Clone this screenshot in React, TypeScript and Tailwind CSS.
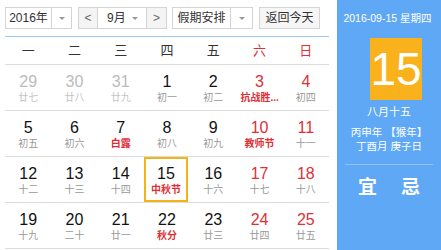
import React from 'react';

type Day = {
  n: number;
  l: string;
  muted?: boolean;
  weekend?: boolean;
  fest?: boolean;
  today?: boolean;
};

const weeks: Day[][] = [
  [
    { n: 29, l: '廿七', muted: true },
    { n: 30, l: '廿八', muted: true },
    { n: 31, l: '廿九', muted: true },
    { n: 1, l: '初一' },
    { n: 2, l: '初二' },
    { n: 3, l: '抗战胜...', weekend: true, fest: true },
    { n: 4, l: '初四', weekend: true },
  ],
  [
    { n: 5, l: '初五' },
    { n: 6, l: '初六' },
    { n: 7, l: '白露', fest: true },
    { n: 8, l: '初八' },
    { n: 9, l: '初九' },
    { n: 10, l: '教师节', weekend: true, fest: true },
    { n: 11, l: '十一', weekend: true },
  ],
  [
    { n: 12, l: '十二' },
    { n: 13, l: '十三' },
    { n: 14, l: '十四' },
    { n: 15, l: '中秋节', fest: true, today: true },
    { n: 16, l: '十六' },
    { n: 17, l: '十七', weekend: true },
    { n: 18, l: '十八', weekend: true },
  ],
  [
    { n: 19, l: '十九' },
    { n: 20, l: '二十' },
    { n: 21, l: '廿一' },
    { n: 22, l: '秋分', fest: true },
    { n: 23, l: '廿三' },
    { n: 24, l: '廿四', weekend: true },
    { n: 25, l: '廿五', weekend: true },
  ],
];

const weekdays = ['一', '二', '三', '四', '五', '六', '日'];

const Caret = () => (
  <span className="block w-0 h-0 border-x-[3px] border-x-transparent border-t-[3px] border-t-[#999]" />
);

const DayCell: React.FC<{ d: Day }> = ({ d }) => {
  const numColor = d.muted ? 'text-[#bbb]' : d.weekend ? 'text-[#e02f36]' : 'text-[#111]';
  const lunarColor = d.muted ? 'text-[#c4c4c4]' : d.fest ? 'text-[#e02f36]' : 'text-[#999]';
  return (
    <div
      className={`flex flex-col items-center ${
        d.today ? 'border-2 border-[#f6b318] pt-[6px] mr-[2px]' : 'pt-[8px]'
      }`}
    >
      <span className={`text-[16px] leading-[18px] ${numColor}`}>{d.n}</span>
      <span className={`text-[10px] leading-[14px] ${lunarColor} ${d.fest ? 'font-bold' : ''}`}>{d.l}</span>
    </div>
  );
};

export default function App() {
  return (
    <div className="flex w-[441px] h-[250px] overflow-hidden bg-white font-['Liberation_Sans','Noto_Sans_CJK_SC',sans-serif]">
      {/* calendar */}
      <div className="w-[337px] pl-[5px] pr-[8px] pt-[7px]">
        <div className="flex items-stretch h-[22px] text-[12px] text-[#333]">
          <div className="flex w-[67px] border border-[#d4d4d4] bg-white">
            <span className="w-[46px] flex items-center justify-center border-r border-[#d4d4d4]">2016年</span>
            <span className="flex-1 flex items-center justify-center">
              <Caret />
            </span>
          </div>
          <div className="flex w-[89px] ml-[6px] border border-[#d4d4d4] bg-white">
            <span className="w-[19px] flex items-center justify-center border-r border-[#d4d4d4] bg-[#f4f4f4] text-[#666]">&lt;</span>
            <span className="flex-1 flex items-center pl-[9px]">9月</span>
            <span className="w-[14px] flex items-center">
              <Caret />
            </span>
            <span className="w-[20px] flex items-center justify-center border-l border-[#d4d4d4] bg-[#f4f4f4] text-[#666]">&gt;</span>
          </div>
          <div className="flex w-[81px] ml-[5px] border border-[#d4d4d4] bg-white">
            <span className="w-[58px] flex items-center justify-center border-r border-[#d4d4d4]">假期安排</span>
            <span className="flex-1 flex items-center justify-center">
              <Caret />
            </span>
          </div>
          <div className="w-[61px] ml-[6px] flex items-center justify-center border border-[#d4d4d4] bg-[#f6f6f6]">返回今天</div>
        </div>

        <div className="mt-[7px] border-t border-[#9ccbf2]">
          <div className="grid grid-cols-7 h-[28px] border-b border-[#dcdcdc] text-[13px]">
            {weekdays.map((w, i) => (
              <div
                key={w}
                className={`flex items-center justify-center ${i >= 5 ? 'text-[#e02f36]' : 'text-[#333]'}`}
              >
                {w}
              </div>
            ))}
          </div>
          {weeks.map((row, ri) => (
            <div key={ri} className="grid grid-cols-7 h-[46px] border-b border-[#dcdcdc]">
              {row.map((d) => (
                <DayCell key={`${ri}-${d.n}`} d={d} />
              ))}
            </div>
          ))}
        </div>
      </div>

      {/* side panel */}
      <div className="flex-1 bg-[#5fa8f6] text-white flex flex-col">
        <div className="mt-[11px] pr-[3px] text-[10.5px] leading-[14px] text-center whitespace-nowrap">2016-09-15 星期四</div>
        <div className="mt-[13px] ml-[33px] w-[52px] h-[62px] bg-[#f9b21b] flex items-center justify-center text-[46px] leading-none">
          15
        </div>
        <div className="mt-[5px] text-[11px] leading-[14px] text-center">八月十五</div>
        <div className="mt-[6px] text-[10.5px] leading-[14px] text-center">丙申年 【猴年】</div>
        <div className="text-[10.5px] leading-[14px] text-center">丁酉月 庚子日</div>
        <div className="mt-[11px] mx-[8px] border-t border-[#8ec4fa]" />
        <div className="mt-[11px] flex justify-between px-[21px] text-[19px] leading-[24px] font-bold">
          <span>宜</span>
          <span>忌</span>
        </div>
      </div>
    </div>
  );
}
